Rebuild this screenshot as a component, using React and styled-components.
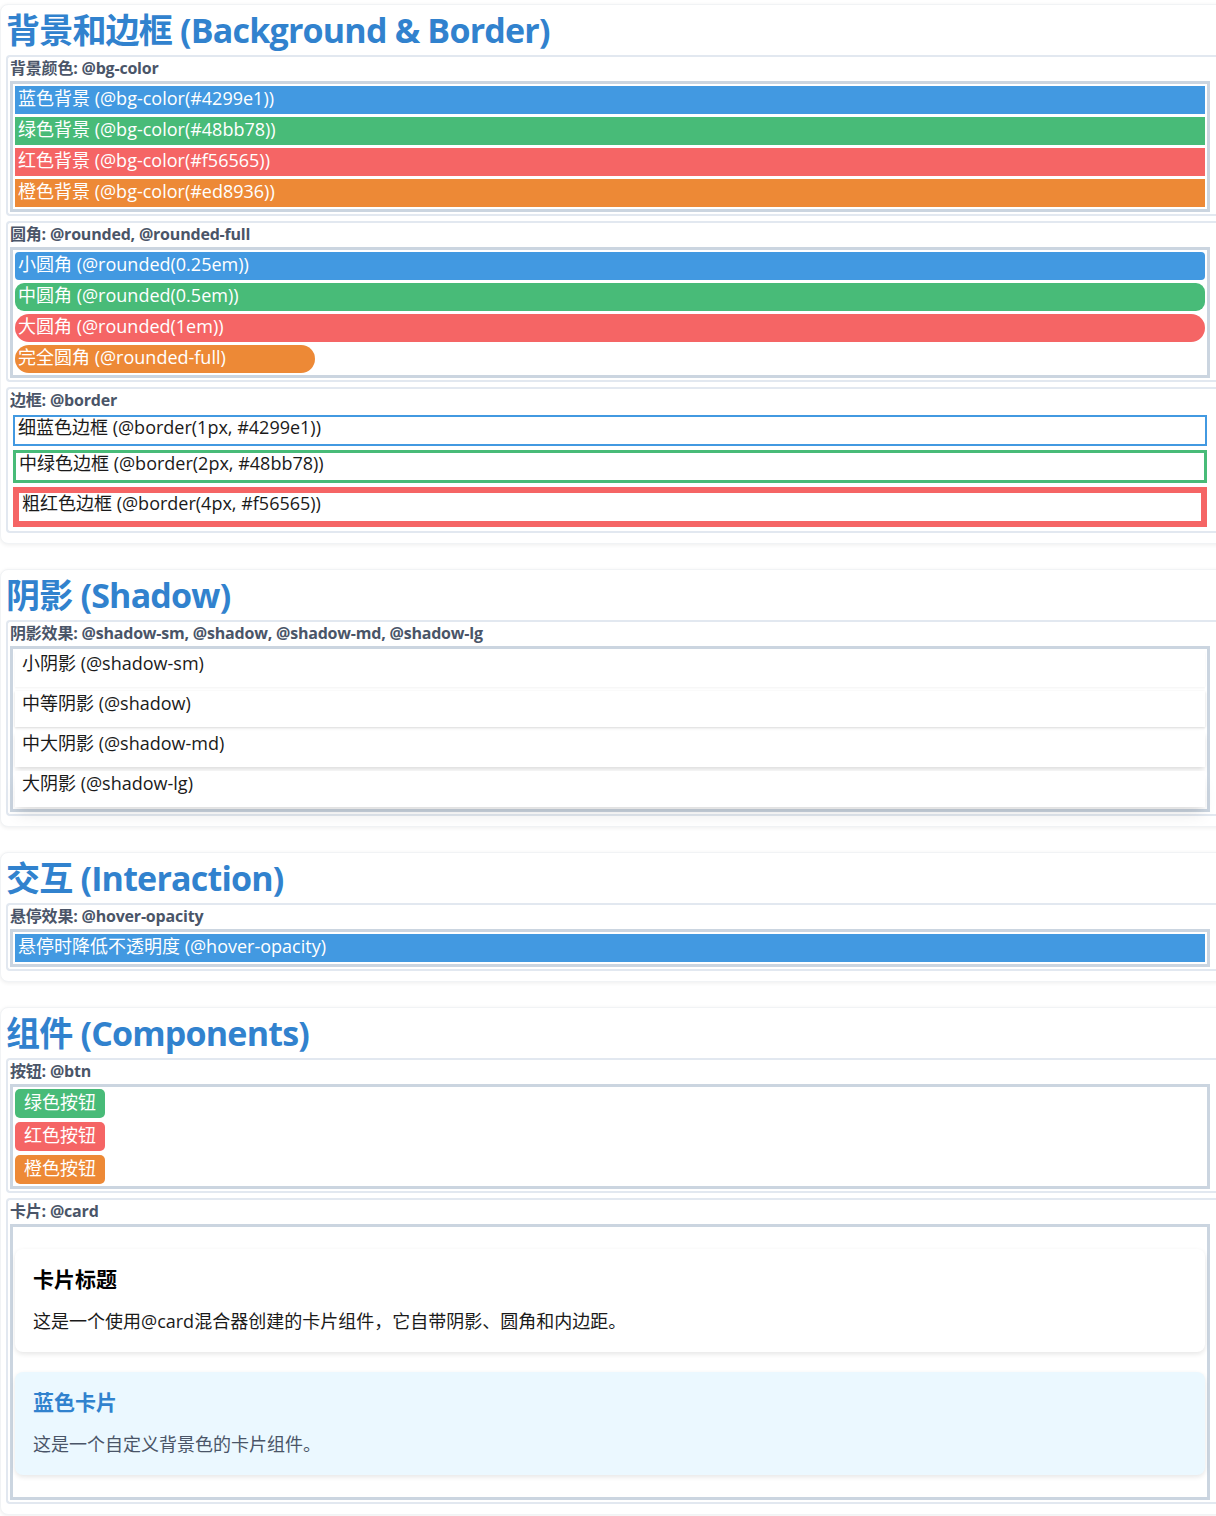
import React from 'react'
import styled, { createGlobalStyle } from 'styled-components'

const GlobalStyle = createGlobalStyle`
  body {
    margin: 0;
    background: #ffffff;
    overflow-x: hidden;
    font-family: 'Open Sans', 'Noto Sans CJK SC', sans-serif;
    color: #1a202c;
  }
`

const Page = styled.div`
  padding-top: 4px;
  width: 1240px;
`

const Section = styled.section`
  background: #fff;
  border: 1px solid #f1f3f5;
  border-radius: 8px;
  box-shadow: 0 1px 4px rgba(0, 0, 0, 0.07);
  padding: 5px 0 10px 5px;
  margin-bottom: 25px;
`

const Title = styled.h2`
  margin: 0 0 5px;
  font-size: 34px;
  line-height: 40px;
  font-weight: 700;
  letter-spacing: -0.8px;
  color: #3182ce;
`

const Example = styled.div`
  border: 2px solid #e2e8f0;
  border-right: none;
  border-radius: 4px 0 0 4px;
  padding: 0 0 2px 2px;
  margin-bottom: 5px;

  &:last-child {
    margin-bottom: 0;
  }
`

const Label = styled.div`
  font-size: 16px;
  line-height: 22px;
  font-weight: 700;
  letter-spacing: -0.2px;
  color: #4a5568;
  margin-bottom: 2px;
`

const DemoBox = styled.div`
  box-sizing: border-box;
  width: 1200px;
  padding: ${({ plain }) => (plain ? '2px 3px' : '2px')};
  border: ${({ plain }) => (plain ? 'none' : '3px solid #cbd5e0')};
`

const palette = {
  blue: '#4299e1',
  green: '#48bb78',
  red: '#f56565',
  orange: '#ed8936',
}

const Bar = styled.div`
  height: 28px;
  line-height: 24px;
  padding: 0 3px;
  margin-bottom: 3px;
  font-size: 18px;
  color: #fff;
  background: ${({ color }) => palette[color]};
  border-radius: ${({ radius }) => radius || '0'};
  width: ${({ narrow }) => (narrow ? '300px' : 'auto')};
  box-sizing: border-box;

  &:last-child {
    margin-bottom: 0;
  }
`

const BorderBox = styled.div`
  font-size: 18px;
  line-height: 20px;
  color: #1a1a1a;
  padding: 0 3px;
  min-height: ${({ width }) => (width > 4 ? 28 : 27)}px;
  border: ${({ width }) => width}px solid ${({ color }) => palette[color]};
  margin-bottom: 4px;

  &:last-child {
    margin-bottom: 0;
  }
`

const shadows = {
  sm: '0 1px 2px rgba(0, 0, 0, 0.05)',
  base: '0 1px 3px rgba(0, 0, 0, 0.1), 0 1px 2px rgba(0, 0, 0, 0.06)',
  md: '0 4px 6px -1px rgba(0, 0, 0, 0.1), 0 2px 4px -1px rgba(0, 0, 0, 0.06)',
  lg: '0 10px 15px -3px rgba(0, 0, 0, 0.1), 0 4px 6px -2px rgba(0, 0, 0, 0.05)',
}

const ShadowItem = styled.div`
  height: 36px;
  line-height: 24px;
  padding: 0 7px;
  margin-bottom: 4px;
  font-size: 18px;
  color: #1a1a1a;
  background: #fff;
  box-shadow: ${({ level }) => shadows[level]};

  &:last-child {
    margin-bottom: 0;
  }
`

const Button = styled.div`
  width: fit-content;
  height: 29px;
  line-height: 27px;
  padding: 0 9px;
  margin-bottom: 4px;
  font-size: 18px;
  color: #fff;
  background: ${({ color }) => palette[color]};
  border-radius: 5px;

  &:last-child {
    margin-bottom: 0;
  }
`

const Card = styled.div`
  margin: 20px 0;
  padding: 17px 18px;
  border-radius: 8px;
  background: ${({ tint }) => (tint ? '#ebf8ff' : '#fff')};
  box-shadow: 0 2px 5px rgba(0, 0, 0, 0.1);

  h3 {
    margin: 0 0 14px;
    font-size: 21px;
    line-height: 27px;
    font-weight: 700;
    color: ${({ tint }) => (tint ? '#3182ce' : '#000')};
  }

  p {
    margin: 0;
    font-size: 18px;
    line-height: 28px;
    color: ${({ tint }) => (tint ? '#4a5568' : '#1a1a1a')};
  }
`

const App = () => (
  <Page>
    <GlobalStyle />

    <Section>
      <Title>背景和边框 (Background &amp; Border)</Title>
      <Example>
        <Label>背景颜色: @bg-color</Label>
        <DemoBox>
          <Bar color="blue">蓝色背景 (@bg-color(#4299e1))</Bar>
          <Bar color="green">绿色背景 (@bg-color(#48bb78))</Bar>
          <Bar color="red">红色背景 (@bg-color(#f56565))</Bar>
          <Bar color="orange">橙色背景 (@bg-color(#ed8936))</Bar>
        </DemoBox>
      </Example>
      <Example>
        <Label>圆角: @rounded, @rounded-full</Label>
        <DemoBox>
          <Bar color="blue" radius="4px">小圆角 (@rounded(0.25em))</Bar>
          <Bar color="green" radius="9px">中圆角 (@rounded(0.5em))</Bar>
          <Bar color="red" radius="18px">大圆角 (@rounded(1em))</Bar>
          <Bar color="orange" radius="9999px" narrow>完全圆角 (@rounded-full)</Bar>
        </DemoBox>
      </Example>
      <Example>
        <Label>边框: @border</Label>
        <DemoBox plain>
          <BorderBox width={2} color="blue">细蓝色边框 (@border(1px, #4299e1))</BorderBox>
          <BorderBox width={3} color="green">中绿色边框 (@border(2px, #48bb78))</BorderBox>
          <BorderBox width={6} color="red">粗红色边框 (@border(4px, #f56565))</BorderBox>
        </DemoBox>
      </Example>
    </Section>

    <Section>
      <Title>阴影 (Shadow)</Title>
      <Example>
        <Label>阴影效果: @shadow-sm, @shadow, @shadow-md, @shadow-lg</Label>
        <DemoBox>
          <ShadowItem level="sm">小阴影 (@shadow-sm)</ShadowItem>
          <ShadowItem level="base">中等阴影 (@shadow)</ShadowItem>
          <ShadowItem level="md">中大阴影 (@shadow-md)</ShadowItem>
          <ShadowItem level="lg">大阴影 (@shadow-lg)</ShadowItem>
        </DemoBox>
      </Example>
    </Section>

    <Section>
      <Title>交互 (Interaction)</Title>
      <Example>
        <Label>悬停效果: @hover-opacity</Label>
        <DemoBox>
          <Bar color="blue">悬停时降低不透明度 (@hover-opacity)</Bar>
        </DemoBox>
      </Example>
    </Section>

    <Section>
      <Title>组件 (Components)</Title>
      <Example>
        <Label>按钮: @btn</Label>
        <DemoBox>
          <Button color="green">绿色按钮</Button>
          <Button color="red">红色按钮</Button>
          <Button color="orange">橙色按钮</Button>
        </DemoBox>
      </Example>
      <Example>
        <Label>卡片: @card</Label>
        <DemoBox>
          <Card>
            <h3>卡片标题</h3>
            <p>这是一个使用@card混合器创建的卡片组件，它自带阴影、圆角和内边距。</p>
          </Card>
          <Card tint>
            <h3>蓝色卡片</h3>
            <p>这是一个自定义背景色的卡片组件。</p>
          </Card>
        </DemoBox>
      </Example>
    </Section>
  </Page>
)

export default App
